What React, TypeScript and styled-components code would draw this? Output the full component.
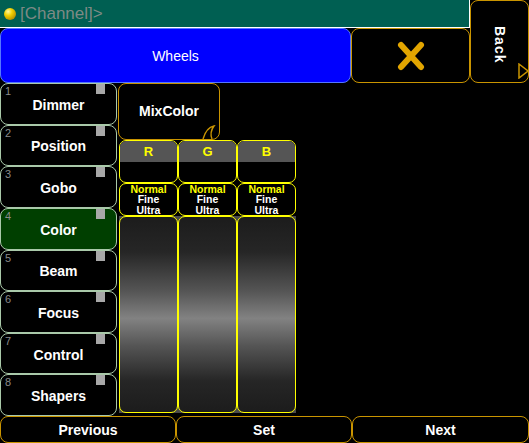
import React from 'react';
import styled, { createGlobalStyle } from 'styled-components';

const GlobalStyle = createGlobalStyle`
  html, body {
    margin: 0;
    padding: 0;
    background: #000;
  }
  body {
    font-family: "Liberation Sans", Arial, sans-serif;
  }
`;

const ORANGE = '#c99400';
const YELLOW = '#ffff00';

const Screen = styled.div`
  width: 529px;
  height: 443px;
  background: #000;
  display: grid;
  grid-template-rows: 83px 333px 27px;
  overflow: hidden;
`;

const TopArea = styled.div`
  display: grid;
  grid-template-columns: 470px 59px;
  grid-template-rows: 28px 55px;
`;

const CommandLine = styled.div`
  grid-column: 1;
  grid-row: 1;
  background: #005f52;
  border-right: 1px solid #fff;
  border-bottom: 1px solid #fff;
  display: flex;
  align-items: center;
  gap: 4px;
  padding-left: 4px;
  box-sizing: border-box;
`;

const Ball = styled.span`
  width: 12px;
  height: 12px;
  border-radius: 50%;
  background: radial-gradient(circle at 35% 30%, #fff8a0 0%, #f2d000 35%, #b08a00 80%, #6a5200 100%);
`;

const Prompt = styled.span`
  color: #7d8a85;
  font-size: 17px;
`;

const TitleRow = styled.div`
  grid-column: 1;
  grid-row: 2;
  display: flex;
`;

const WheelsButton = styled.div`
  width: 351px;
  box-sizing: border-box;
  background: #0000ff;
  border: 1px solid #5577ff;
  border-radius: 8px;
  color: #fff;
  font-size: 14px;
  display: flex;
  align-items: center;
  justify-content: center;
`;

const CloseButton = styled.div`
  flex: 1;
  box-sizing: border-box;
  border: 1px solid ${ORANGE};
  border-radius: 8px;
  display: flex;
  align-items: center;
  justify-content: center;
`;

const BackButton = styled.div`
  grid-column: 2;
  grid-row: 1 / span 2;
  position: relative;
  box-sizing: border-box;
  border: 1px solid ${ORANGE};
  border-radius: 8px;
  display: flex;
  align-items: flex-start;
  justify-content: center;
  padding-top: 25px;
`;

const BackLabel = styled.span`
  color: #fff;
  font-weight: bold;
  font-size: 14px;
  letter-spacing: 1px;
  writing-mode: vertical-rl;
`;

const CornerArrow = styled.svg`
  position: absolute;
  right: -1px;
  bottom: 3px;
`;

const Main = styled.div`
  display: grid;
  grid-template-columns: 117px 1fr;
`;

const FeatureList = styled.div`
  display: flex;
  flex-direction: column;
`;

const FeatureButton = styled.div<{ active?: boolean }>`
  position: relative;
  flex: 1;
  box-sizing: border-box;
  border: 1px solid #a9c9a9;
  border-radius: 8px;
  background: ${({ active }) => (active ? '#003f00' : '#000')};
  color: #fff;
  font-weight: bold;
  font-size: 14px;
  display: flex;
  align-items: center;
  justify-content: center;
  padding-top: 2px;
`;

const FeatureNumber = styled.span`
  position: absolute;
  left: 4px;
  top: 1px;
  color: #8a8a8a;
  font-size: 11px;
  font-weight: normal;
`;

const FeatureFlag = styled.span`
  position: absolute;
  right: 11px;
  top: 0;
  width: 9px;
  height: 10px;
  background: #a8a8a8;
`;

const Content = styled.div`
  display: flex;
  flex-direction: column;
  align-items: flex-start;
  padding-left: 1px;
`;

const MixColorButton = styled.div`
  position: relative;
  width: 102px;
  height: 57px;
  box-sizing: border-box;
  border: 1px solid ${ORANGE};
  border-radius: 8px;
  color: #fff;
  font-weight: bold;
  font-size: 14px;
  display: flex;
  align-items: center;
  justify-content: center;
  padding-bottom: 2px;
`;

const Hook = styled.svg`
  position: absolute;
  right: 3px;
  bottom: -1px;
`;

const ChannelTable = styled.div`
  margin-left: 1px;
  display: grid;
  grid-template-columns: repeat(3, 59px);
  grid-template-rows: 43px 33px 197px;
`;

const HeaderCell = styled.div`
  box-sizing: border-box;
  border: 1px solid ${YELLOW};
  border-radius: 7px;
  overflow: hidden;
  display: flex;
  flex-direction: column;
  background: #000;
`;

const HeaderName = styled.div`
  height: 21px;
  background: #555;
  color: ${YELLOW};
  font-weight: bold;
  font-size: 13px;
  display: flex;
  align-items: center;
  justify-content: center;
`;

const ModeCell = styled.div`
  box-sizing: border-box;
  border: 1px solid ${YELLOW};
  border-radius: 7px;
  display: flex;
  flex-direction: column;
  align-items: center;
  justify-content: center;
  font-weight: bold;
  font-size: 10.5px;
  line-height: 10.5px;
  color: #fff;
`;

const ModeName = styled.span<{ selected?: boolean }>`
  color: ${({ selected }) => (selected ? YELLOW : '#fff')};
`;

const FaderSlot = styled.div`
  background: #4a4a4a;
`;

const Fader = styled.div`
  height: 100%;
  box-sizing: border-box;
  border: 1px solid ${YELLOW};
  border-radius: 7px;
  background: linear-gradient(
    #1c1c1c 0%,
    #262626 18%,
    #555 38%,
    #828282 52%,
    #555 66%,
    #262626 84%,
    #1c1c1c 100%
  );
`;

const BottomBar = styled.div`
  display: grid;
  grid-template-columns: 176px 176px 177px;
`;

const BarButton = styled.div`
  box-sizing: border-box;
  border: 1px solid ${ORANGE};
  border-radius: 8px;
  color: #fff;
  font-weight: bold;
  font-size: 14px;
  display: flex;
  align-items: center;
  justify-content: center;
`;

const features = ['Dimmer', 'Position', 'Gobo', 'Color', 'Beam', 'Focus', 'Control', 'Shapers'];
const channels = ['R', 'G', 'B'];

export default function App() {
  return (
    <>
      <GlobalStyle />
      <Screen>
        <TopArea>
          <CommandLine>
            <Ball />
            <Prompt>[Channel]&gt;</Prompt>
          </CommandLine>
          <TitleRow>
            <WheelsButton>Wheels</WheelsButton>
            <CloseButton>
              <svg width="28" height="30" viewBox="0 0 28 30">
                <path
                  d="M4 4 L24 26 M24 4 L4 26"
                  stroke="#e2a500"
                  strokeWidth="6"
                  strokeLinecap="round"
                  fill="none"
                />
              </svg>
            </CloseButton>
          </TitleRow>
          <BackButton>
            <BackLabel>Back</BackLabel>
            <CornerArrow width="11" height="16" viewBox="0 0 11 16">
              <path d="M1 1 L10 8 L1 15 Z" fill="none" stroke={ORANGE} strokeWidth="1.5" />
            </CornerArrow>
          </BackButton>
        </TopArea>

        <Main>
          <FeatureList>
            {features.map((name, i) => (
              <FeatureButton key={name} active={name === 'Color'}>
                <FeatureNumber>{i + 1}</FeatureNumber>
                <FeatureFlag />
                {name}
              </FeatureButton>
            ))}
          </FeatureList>

          <Content>
            <MixColorButton>
              MixColor
              <Hook width="14" height="16" viewBox="0 0 14 16">
                <path
                  d="M1 15 C3 8 7 3 12 2 C9 6 8 10 10 15"
                  fill="none"
                  stroke={ORANGE}
                  strokeWidth="1.4"
                />
              </Hook>
            </MixColorButton>
            <ChannelTable>
              {channels.map((c) => (
                <HeaderCell key={c}>
                  <HeaderName>{c}</HeaderName>
                </HeaderCell>
              ))}
              {channels.map((c) => (
                <ModeCell key={c}>
                  <ModeName selected>Normal</ModeName>
                  <ModeName>Fine</ModeName>
                  <ModeName>Ultra</ModeName>
                </ModeCell>
              ))}
              {channels.map((c) => (
                <FaderSlot key={c}>
                  <Fader />
                </FaderSlot>
              ))}
            </ChannelTable>
          </Content>
        </Main>

        <BottomBar>
          <BarButton>Previous</BarButton>
          <BarButton>Set</BarButton>
          <BarButton>Next</BarButton>
        </BottomBar>
      </Screen>
    </>
  );
}
